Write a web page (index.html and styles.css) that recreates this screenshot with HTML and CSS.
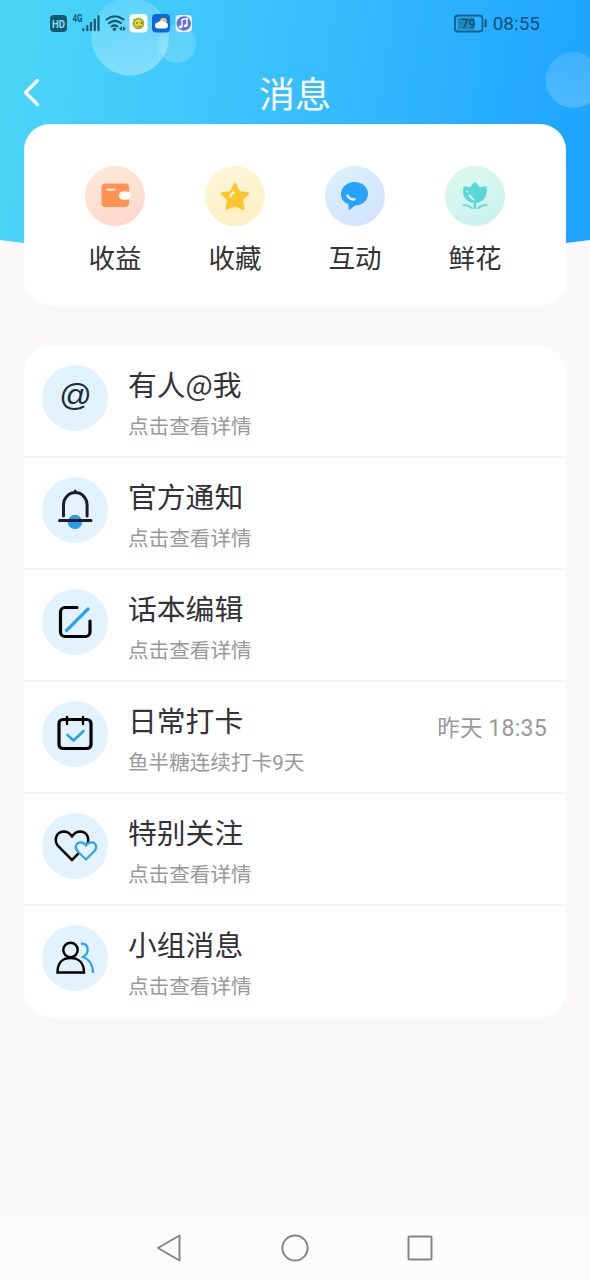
FILE: index.html
```html
<!DOCTYPE html>
<html lang="zh-CN">
  <head>
    <meta charset="UTF-8" />
    <meta name="viewport" content="width=device-width, initial-scale=1.0" />
    <title>消息</title>
    <link rel="stylesheet" href="styles.css">
  </head>
  <body>
    <!-- blue header background with the bubbles -->
    <svg class="hero" width="590" height="262" viewBox="0 0 590 262">
      <defs>
        <linearGradient id="sky" gradientUnits="userSpaceOnUse" x1="0" y1="110" x2="560" y2="200">
          <stop offset="0" stop-color="#4ad6f7" />
          <stop offset="0.5" stop-color="#37bffd" />
          <stop offset="1" stop-color="#20a5ff" />
        </linearGradient>
        <linearGradient id="bubble" x1="0" y1="0" x2="0.3" y2="1">
          <stop offset="0" stop-color="#fff" stop-opacity="0.1" />
          <stop offset="1" stop-color="#fff" stop-opacity="0.34" />
        </linearGradient>
        <linearGradient id="bubble2" x1="0" y1="0" x2="0.3" y2="1">
          <stop offset="0" stop-color="#fff" stop-opacity="0.12" />
          <stop offset="1" stop-color="#fff" stop-opacity="0.2" />
        </linearGradient>
      </defs>
      <path d="M0 0H590V240Q295 280 0 240Z" fill="url(#sky)" />
      <circle cx="130" cy="36.500" r="39" fill="url(#bubble)" />
      <circle cx="177" cy="44" r="19" fill="url(#bubble2)" />
      <circle cx="573.500" cy="80" r="28" fill="url(#bubble2)" />
    </svg>

    <div class="status">
      <svg class="status-left" width="145" height="24" viewBox="50 11 145 24">
        <rect x="50" y="15" width="17" height="17" rx="4" fill="#155873" />
        <text x="58.500" y="28" class="hd" text-anchor="middle" textLength="13" lengthAdjust="spacingAndGlyphs">HD</text>
        <text x="72.500" y="22" class="net" textLength="10" lengthAdjust="spacingAndGlyphs">4G</text>
        <path d="M83.300 29.200v1M87.300 26v4.200M91 22.800v7.400M94.800 19.500v10.700M98.500 16v14.200" stroke="#155873" stroke-width="2.200" stroke-linecap="round" />
        <path d="M106.500 19.500q8.500-6.500 17 0M109 23.200q6-4.600 12 0M111.500 26.500q3-2.200 6 0" fill="none" stroke="#155873" stroke-width="2.100" stroke-linecap="round" />
        <circle cx="114.500" cy="29.300" r="1.700" fill="#155873" />
        <path d="M122 26.300v4.800l-3-2.400zM123 26.300v4.800l3-2.400z" fill="#155873" />
        <rect x="129.500" y="14" width="18" height="18.500" rx="4" fill="#fff" />
        <circle cx="138.500" cy="23.500" r="5" fill="#f5cf27" stroke="#62b63f" stroke-width="1.500" />
        <path d="M133 19l3 1M132.500 23l2 .5" stroke="#6abb45" />
        <circle cx="137" cy="23" r=".8" fill="#543" />
        <circle cx="141.500" cy="23" r=".8" fill="#543" />
        <path d="M137 26q2 1.500 4 0" fill="none" stroke="#d45b20" />
        <rect x="152" y="14" width="18" height="18.500" rx="4" fill="#0b67dd" />
        <circle cx="163.500" cy="21" r="3.300" fill="#f8bc4b" />
        <path d="M158 28.500a3 3 0 0 1 0-6 4 4 0 0 1 7 0 3 3 0 0 1 0 6z" fill="#fff" />
        <rect x="175.500" y="15" width="16.500" height="17" rx="4" fill="#eef0ff" />
        <circle cx="183.800" cy="23.500" r="7.200" fill="#6272d6" />
        <path d="M182 26.500v-7l5-1v7" fill="none" stroke="#fff" stroke-width="1.400" />
        <ellipse cx="180.700" cy="26.700" rx="1.900" ry="1.500" fill="#fff" />
        <ellipse cx="185.700" cy="25.700" rx="1.900" ry="1.500" fill="#fff" />
      </svg>
      <div class="status-right">
        <svg width="34" height="20" viewBox="454 13 34 20">
          <rect x="457.500" y="17.500" width="17" height="12" rx="1.500" fill="#1f86b5" />
          <rect x="455" y="15.500" width="27.500" height="16" rx="3" fill="none" stroke="#11608f" stroke-width="1.900" />
          <path d="M485.700 20v6.500" stroke="#11507a" stroke-width="2" stroke-linecap="round" />
          <text x="468.500" y="28" class="battery" text-anchor="middle">79</text>
        </svg>
        <span class="clock">08:55</span>
      </div>
    </div>

    <header class="top">
      <svg class="back" width="20" height="30" viewBox="0 0 20 30">
        <path d="M15.500 3.500L3.500 15.500 15.500 27.500" fill="none" stroke="#fff" stroke-width="3.200" stroke-linecap="round" stroke-linejoin="round" />
      </svg>
      <h1>消息</h1>
    </header>

    <div class="actions">
      <div class="action">
        <div class="circle orange">
          <svg width="60" height="60" viewBox="0 0 60 60">
            <rect x="16.500" y="17.500" width="27.500" height="23.500" rx="4" fill="#ff9353" />
            <rect x="34" y="25.500" width="11.500" height="8.200" rx="4.100" fill="#fff" />
            <path d="M22 23.600h7.500" stroke="#fff" stroke-width="1.800" stroke-linecap="round" />
          </svg>
        </div>
        <span>收益</span>
      </div>
      <div class="action">
        <div class="circle yellow">
          <svg width="60" height="60" viewBox="0 0 60 60">
            <path d="M30 18l4 8.200 9 1.200-6.300 6.300 1.500 9L30 39.200 21.800 42.700l1.500-9L17 27.400l9-1.200z" fill="#fdc52b" stroke="#fdc52b" stroke-width="2.500" stroke-linejoin="round" />
            <path d="M25.500 30.500q.6-3 3.500-4" fill="none" stroke="#fff" stroke-width="2" stroke-linecap="round" />
          </svg>
        </div>
        <span>收藏</span>
      </div>
      <div class="action">
        <div class="circle blue">
          <svg width="60" height="60" viewBox="0 0 60 60">
            <path d="M29.500 16c7.600 0 13.500 5 13.500 11.700s-5.500 11-11.500 11.500c-3 .3-4.500 3.500-7 4.500-.8.200-1-.3-1-1v-4.500C18.500 36.500 16 32.500 16 28c0-7 6-12 13.500-12z" fill="#28a2fb" />
            <path d="M22.500 29.500q2.500 4.500 7 3.800" fill="none" stroke="#fff" stroke-width="2.200" stroke-linecap="round" />
          </svg>
        </div>
        <span>互动</span>
      </div>
      <div class="action">
        <div class="circle green">
          <svg width="60" height="60" viewBox="0 0 60 60">
            <path d="M18.500 20.500q4-.5 6.500 1 1.800-3.500 4.800-5.500 3.200 2 5 5.500 2.700-1.500 6.700-1c1.500 9.500-2.500 15.500-10.300 16.500v6h-2.600v-6c-8-1-11.700-7-10.100-16.500z" fill="#59d8d5" />
            <path d="M18.500 39.200q5-.5 8.300 3M41.500 39.200q-5-.5-8.300 3" fill="none" stroke="#67d9d4" stroke-width="1.900" stroke-linecap="round" />
            <path d="M24.500 29.500q1.500 2.500 4 4M22.300 25.500v.1" fill="none" stroke="#fff" stroke-width="1.800" stroke-linecap="round" />
          </svg>
        </div>
        <span>鲜花</span>
      </div>
    </div>

    <div class="list">
      <div class="row">
        <div class="icon at">@</div>
        <div class="info">
          <h2>有人@我</h2>
          <p>点击查看详情</p>
        </div>
      </div>
      <div class="row">
        <div class="icon">
          <svg width="66" height="66" viewBox="0 0 66 66">
            <circle cx="33" cy="45" r="7.200" fill="#2b9beb" />
            <path d="M21.500 39V28a11.800 12.500 0 0 1 23.600 0v11M33.300 15.500v-1.500M17.500 43.500h31.500" fill="none" stroke="#1b1b2c" stroke-width="3" stroke-linecap="round" />
          </svg>
        </div>
        <div class="info">
          <h2>官方通知</h2>
          <p>点击查看详情</p>
        </div>
      </div>
      <div class="row">
        <div class="icon">
          <svg width="66" height="66" viewBox="0 0 66 66">
            <path d="M35 18.500H23a4.500 4.500 0 0 0-4.500 4.500v20a4.500 4.500 0 0 0 4.500 4.500h20.500a4.500 4.500 0 0 0 4.500-4.500V32" fill="none" stroke="#000" stroke-width="3.200" stroke-linecap="round" />
            <path d="M24.500 41.500L46 20" stroke="#2ea2e6" stroke-width="3.200" stroke-linecap="round" />
          </svg>
        </div>
        <div class="info">
          <h2>话本编辑</h2>
          <p>点击查看详情</p>
        </div>
      </div>
      <div class="row">
        <div class="icon">
          <svg width="66" height="66" viewBox="0 0 66 66">
            <rect x="17" y="18.500" width="32" height="29" rx="4" fill="none" stroke="#000" stroke-width="3.200" />
            <path d="M25 16v7M41 16v7" stroke="#000" stroke-width="2.400" stroke-linecap="round" />
            <path d="M25.500 34l6 5.500L41.500 30" fill="none" stroke="#2ea2dc" stroke-width="2.600" stroke-linecap="round" stroke-linejoin="round" />
          </svg>
        </div>
        <div class="info">
          <h2>日常打卡</h2>
          <p>鱼半糖连续打卡<span class="num">9</span>天</p>
        </div>
        <span class="time">昨天 <span class="num">18:35</span></span>
      </div>
      <div class="row">
        <div class="icon">
          <svg width="66" height="66" viewBox="0 0 66 66">
            <path d="M30 47L16.500 33.500C11 27 14.500 19 21.500 18.500c4 0 6.500 2 8.500 4.800 2-2.800 4.500-4.800 8.500-4.800 7 .5 10.500 8.500 5 15z" fill="none" stroke="#000" stroke-width="2.500" />
            <path d="M44 46.500l-8.300-8.200c-4-4.500-1-9 3-9 2.500 0 4 1.200 5.300 3 1.300-1.800 2.800-3 5.300-3 4 0 7 4.500 3 9z" fill="#e2f3fe" stroke="#2fa5e4" stroke-width="2.200" />
          </svg>
        </div>
        <div class="info">
          <h2>特别关注</h2>
          <p>点击查看详情</p>
        </div>
      </div>
      <div class="row">
        <div class="icon">
          <svg width="66" height="66" viewBox="0 0 66 66">
            <circle cx="28.500" cy="25" r="7.200" fill="none" stroke="#000" stroke-width="2.400" />
            <path d="M15.500 47.500c0-9 4.500-14.500 13-14.500s13.500 5.500 13.500 14.500z" fill="none" stroke="#000" stroke-width="2.400" />
            <path d="M39 18.500c8 0 9 9.500 2 13.500 6 2 10 8 10 16" fill="none" stroke="#2fa5e4" stroke-width="2.300" />
          </svg>
        </div>
        <div class="info">
          <h2>小组消息</h2>
          <p>点击查看详情</p>
        </div>
      </div>
    </div>

    <nav class="navbar">
      <svg width="30" height="30" viewBox="0 0 30 30">
        <path d="M3 15L24.500 2.500v25z" />
      </svg>
      <svg width="30" height="30" viewBox="0 0 30 30">
        <circle cx="15" cy="15" r="12.600" />
      </svg>
      <svg width="30" height="30" viewBox="0 0 30 30">
        <rect x="3.500" y="3.500" width="23" height="23" rx="1" />
      </svg>
    </nav>
  </body>
</html>
```
FILE: styles.css
```css
* {
  box-sizing: border-box;
}
body {
  margin: 0;
  height: 1280px;
  display: flex;
  flex-direction: column;
  position: relative;
  background-color: #faf8f9;
  font-family: "Noto Sans CJK SC", sans-serif;
  color: #333;
}
svg {
  display: block;
}
h1,
h2,
p {
  margin: 0;
  font-weight: 400;
}
.hero {
  position: absolute;
  top: 0;
  left: 0;
  z-index: -1;
}

/* status bar */
.status {
  height: 46px;
  padding: 11px 50px 0;
  display: flex;
  justify-content: space-between;
  align-items: flex-start;
}
.status-right {
  display: flex;
  gap: 5px;
  padding-top: 2px;
}
.clock {
  font: 19px/22px Roboto, sans-serif;
  color: #10527c;
}
.hd {
  font: bold 11px Roboto, sans-serif;
  fill: #8be0f5;
}
.net {
  font: bold 10px Roboto, sans-serif;
  fill: #155873;
}
.battery {
  font: 12.5px Roboto, sans-serif;
  fill: #0b4568;
}

/* title bar */
.top {
  height: 78px;
  padding: 0 22px;
  display: grid;
  grid-template-columns: 20px 1fr 20px;
  align-items: center;
}
.back {
  margin-top: 14px;
}
.top h1 {
  font-size: 36px;
  line-height: 50px;
  margin-top: 14px;
  color: #fff;
  text-align: center;
}

.actions {
  height: 181px;
  margin: 0 24px;
  padding: 42px 31px 0;
  display: flex;
  border-radius: 26px;
  background-color: #fff;
}
.action {
  width: 120px;
  display: flex;
  flex-direction: column;
  align-items: center;
  font-size: 26.5px;
  line-height: 36px;
}
.action span {
  margin-top: 13px;
}
.circle {
  width: 60px;
  height: 60px;
  border-radius: 50%;
}
.orange {
  background: linear-gradient(160deg, #fdebd5, #fdd6cc);
}
.yellow {
  background: linear-gradient(160deg, #fff6dc, #fdefc0);
}
.blue {
  background: linear-gradient(150deg, #def1fd, #cfe2fc);
}
.green {
  background: linear-gradient(160deg, #def9ee, #c8f1f0);
}

/* message list */
.list {
  height: 671px;
  margin: 41px 24px 0;
  border-radius: 26px;
  background-color: #fff;
  overflow: hidden;
}
.row {
  height: 112px;
  padding: 18px 19px 0 18px;
  display: flex;
  border-bottom: 2px solid #f6f5f6;
}
.row:last-child {
  border-bottom: none;
}
.icon {
  width: 66px;
  height: 66px;
  margin-top: 1px;
  flex: none;
  border-radius: 50%;
  background-color: #e2f3fe;
}
.at {
  font: italic 32px/60px "Liberation Sans", sans-serif;
  text-align: center;
  color: #1c2a35;
}
.info {
  flex: 1;
  margin-left: 20px;
}
.info h2 {
  font-size: 28.8px;
  line-height: 40px;
  color: #333238;
}
.info p {
  margin-top: 6px;
  font-size: 20.6px;
  line-height: 30px;
  color: #999;
}
.time {
  margin-top: 9px;
  font-size: 22.5px;
  line-height: 34px;
  letter-spacing: 0.3px;
  color: #999;
}
.num {
  font-family: Roboto, sans-serif;
}
.time .num {
  font-size: 23px;
}

/* phone buttons */
.navbar {
  height: 64px;
  margin-top: auto;
  padding: 0 155px;
  display: flex;
  justify-content: space-between;
  align-items: center;
  background-color: #fcfcfc;
}
.navbar svg {
  fill: none;
  stroke: #858585;
  stroke-width: 2;
  stroke-linejoin: round;
}
```
